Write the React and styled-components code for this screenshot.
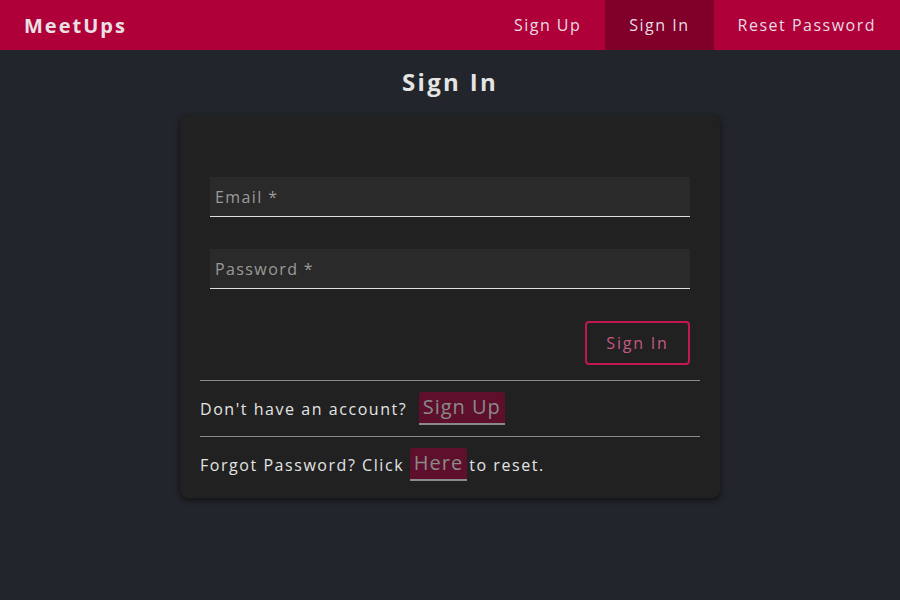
import React from 'react';
import styled, { createGlobalStyle } from 'styled-components';

const GlobalStyle = createGlobalStyle`
  body {
    margin: 0;
    background: #22252b;
    font-family: 'Open Sans', 'Liberation Sans', sans-serif;
    color: #e0e0e0;
  }
`;

const Page = styled.div`
  min-height: 600px;
`;

const NavBar = styled.header`
  height: 50px;
  background: #b0003a;
  display: flex;
  align-items: stretch;
  justify-content: space-between;
`;

const Logo = styled.div`
  display: flex;
  align-items: center;
  padding-left: 24px;
  font-size: 20px;
  font-weight: 700;
  letter-spacing: 2px;
  color: #e8e0e4;
`;

const NavLinks = styled.nav`
  display: flex;
`;

const NavLink = styled.a`
  display: flex;
  align-items: center;
  padding: 0 24px;
  font-size: 16px;
  letter-spacing: 1.5px;
  color: #e8dce2;
  text-decoration: none;
  background: ${(p) => (p.active ? '#80002a' : 'transparent')};
`;

const Title = styled.h1`
  margin: 17px 0 18px;
  text-align: center;
  font-size: 24px;
  font-weight: 700;
  letter-spacing: 2.3px;
  line-height: 30px;
  color: #e4e4e4;
`;

const Card = styled.div`
  width: 540px;
  box-sizing: border-box;
  margin: 0 auto;
  padding: 20px 20px 6px;
  background: #212121;
  border-radius: 8px;
  box-shadow: 0 2px 6px rgba(0, 0, 0, 0.6);
`;

const Form = styled.form`
  padding: 42px 10px 15px;
  display: flex;
  flex-direction: column;
`;

const Field = styled.div`
  height: 39px;
  background: #2a2a2a;
  border-bottom: 1px solid #e0e0e0;
  display: flex;
  align-items: center;
  padding-left: 5px;
  margin-bottom: ${(p) => p.gap || 0}px;
  font-size: 16px;
  letter-spacing: 1.4px;
  color: #9a9a9a;
`;

const Actions = styled.div`
  display: flex;
  justify-content: flex-end;
  margin-top: 32px;
`;

const Button = styled.button`
  width: 105px;
  height: 44px;
  border: 2px solid #c2184f;
  border-radius: 4px;
  background: transparent;
  color: #c45a80;
  font-family: inherit;
  font-size: 16px;
  letter-spacing: 1.8px;
`;

const Divider = styled.hr`
  margin: 0;
  border: none;
  border-top: 1px solid #8a8a8a;
`;

const Line = styled.p`
  margin: 0;
  height: 55px;
  display: flex;
  align-items: center;
  font-size: 16px;
  letter-spacing: 1.55px;
  color: #e4e4e4;
  white-space: pre;
`;

const LinkBox = styled.a`
  display: inline-block;
  padding: 0 4px;
  margin: ${(p) => p.margin};
  height: 31px;
  line-height: 30px;
  background: #5e0f2c;
  border-radius: 3px 3px 0 0;
  border-bottom: 2px solid #8a8a8a;
  font-size: 20px;
  letter-spacing: 1px;
  color: #8a8a8a;
  text-decoration: none;
`;

export default function App() {
  return (
    <Page>
      <GlobalStyle />
      <NavBar>
        <Logo>MeetUps</Logo>
        <NavLinks>
          <NavLink>Sign Up</NavLink>
          <NavLink active>Sign In</NavLink>
          <NavLink>Reset Password</NavLink>
        </NavLinks>
      </NavBar>
      <Title>Sign In</Title>
      <Card>
        <Form>
          <Field gap={32}>Email *</Field>
          <Field>Password *</Field>
          <Actions>
            <Button type="button">Sign In</Button>
          </Actions>
        </Form>
        <Divider />
        <Line>
          Don't have an account?  <LinkBox margin="0">Sign Up</LinkBox>
        </Line>
        <Divider />
        <Line>
          Forgot Password? Click <LinkBox margin="0 2px 0 0">Here</LinkBox>to reset.
        </Line>
      </Card>
    </Page>
  );
}
